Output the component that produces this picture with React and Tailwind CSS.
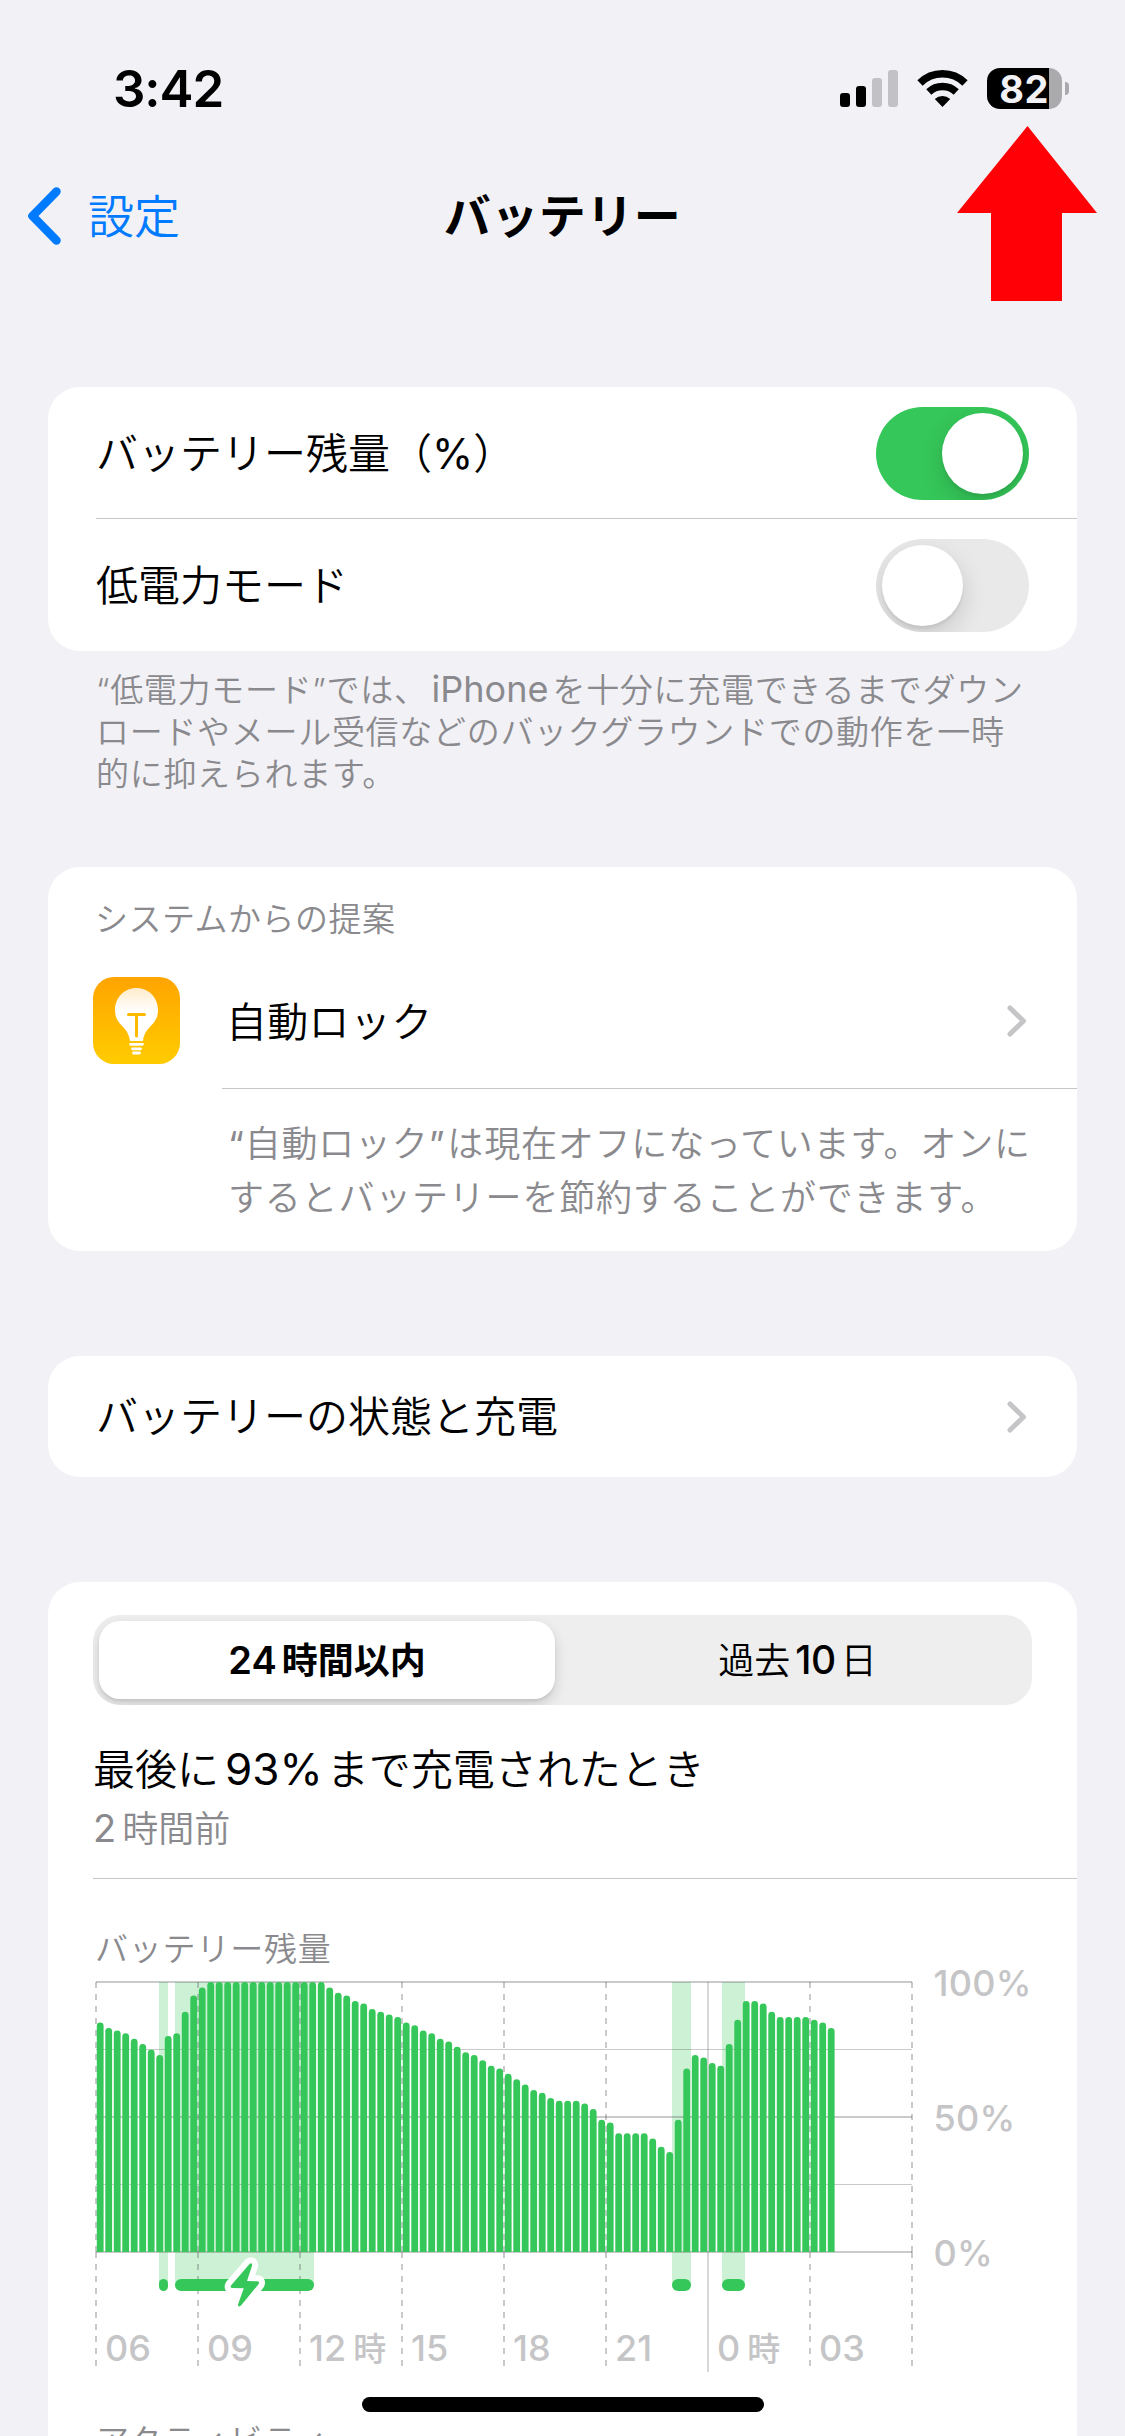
import React from 'react';
import clsx from 'clsx';

const levels = [
  85, 83, 82, 81, 79, 77, 75, 73, 80, 81, 89, 95, 98,
  100, 100, 100, 100, 100, 100, 100, 100, 100, 100, 100, 100, 100, 100,
  98, 96, 95, 93, 92, 90, 89, 88, 87, 85, 84, 82, 81, 79, 78, 76, 74, 73, 71, 69, 68,
  66, 64, 62, 60, 59, 57, 56, 56, 56, 55, 53, 49, 48, 44, 44, 44, 44, 42, 39, 37,
  49, 68, 73, 72, 70, 69, 77, 86, 93, 93, 92, 89, 87, 87, 87, 87, 86, 85, 83
];

const chargingSpans = [
  { start: 63, width: 9 },
  { start: 79, width: 139 },
  { start: 576, width: 19 },
  { start: 626, width: 23 }
];

const hours = [
  { label: '06' },
  { label: '09' },
  { label: '12', unit: '時' },
  { label: '15' },
  { label: '18' },
  { label: '21' },
  { label: '0', unit: '時', solid: true },
  { label: '03' },
  { label: '' }
];

const GREEN = '#35c759';
const BOLT = 'M19.5 2 L1 23.5 Q-0.2 26 2.5 26 L13.8 26.3 L8 42.5 Q8 46 11 43.5 L28.5 22.3 Q30 19.3 27.2 19.3 L17 19 L22.2 3.2 Q22 0 19.5 2 Z';

const Latin = ({ children, className }) => (
  <span className={clsx('font-normal', className)}>{children}</span>
);

const StatusBar = () => (
  <div className="flex h-[154px] items-start justify-between pl-[113px] pr-[56px] pt-[68px]">
    <span className="text-[51px] font-semibold leading-[41px] tracking-[-1.1px]">3:42</span>
    <div className="flex h-[41px] items-center">
      <svg width="58" height="37" viewBox="0 0 58 37">
        <rect x="0" y="23" width="10" height="14" rx="3" />
        <rect x="16" y="16" width="10" height="21" rx="3" />
        <rect x="32" y="8" width="10" height="29" rx="3" fill="#c2c1c6" />
        <rect x="48" y="0" width="10" height="37" rx="3" fill="#c2c1c6" />
      </svg>
      <svg className="ml-[19px]" width="51" height="37" viewBox="0 0 51 37">
        <path d="M3 13 A32 32 0 0 1 48 13" fill="none" stroke="#000" strokeWidth="7.5" />
        <path d="M11.8 22 A20 20 0 0 1 39.2 22" fill="none" stroke="#000" strokeWidth="7.5" />
        <path d="M17.8 29 A11.5 11.5 0 0 1 33.2 29 L25.5 37 Z" />
      </svg>
      <div className="ml-[19px] flex h-[41px] w-[75px] items-center justify-center rounded-[13px] bg-[linear-gradient(90deg,#000_62px,#aaaaac_62px)] pr-px text-[38px] font-bold leading-none tracking-[0.5px] text-[#f2f1f6]">
        82
      </div>
      <div className="ml-[3px] h-[13px] w-[4px] rounded-r-full bg-[#aaaaac]" />
    </div>
  </div>
);

const NavBar = () => (
  <div className="grid h-[124px] grid-cols-3 items-center">
    <button className="flex items-center pl-[27px] text-[#007aff]">
      <svg width="36" height="58" viewBox="0 0 36 58" fill="none" stroke="currentColor" strokeWidth="8.5" strokeLinecap="round" strokeLinejoin="round">
        <path d="M29.5 4.5 L5.5 29 L29.5 53.5" />
      </svg>
      <span className="ml-[25px] text-[46px] leading-none">設定</span>
    </button>
    <h1 className="-mt-[2px] text-center text-[47px] font-bold leading-none tracking-[0.5px]">バッテリー</h1>
  </div>
);

const Toggle = ({ on }) => (
  <div className={clsx('flex h-[93px] w-[153px] overflow-hidden rounded-full p-[6px]', on ? 'justify-end bg-[#35c759]' : 'bg-[#e9e9ea]')}>
    <div className="size-[81px] rounded-full bg-white shadow-[0_9px_24px_rgba(0,0,0,0.15),0_3px_3px_rgba(0,0,0,0.06)]" />
  </div>
);

const Chevron = () => (
  <svg width="20" height="32" viewBox="0 0 20 32" fill="none" stroke="#c5c5c7" strokeWidth="5" strokeLinecap="round" strokeLinejoin="round">
    <path d="M3 3 L16.5 16 L3 29" />
  </svg>
);

const Card = ({ className, children }) => (
  <section className={clsx('rounded-[32px] bg-white', className)}>{children}</section>
);

const BulbIcon = () => (
  <svg width="87" height="87" viewBox="0 0 87 87">
    <defs>
      <linearGradient id="tile" x1="0" y1="0" x2="0" y2="1">
        <stop offset="0" stopColor="#ffa400" />
        <stop offset="1" stopColor="#ffcc00" />
      </linearGradient>
      <linearGradient id="glass" x1="0" y1="0" x2="0" y2="1">
        <stop offset="0" stopColor="#ffeccb" />
        <stop offset="0.45" stopColor="#ffffff" />
      </linearGradient>
    </defs>
    <rect width="87" height="87" rx="21" fill="url(#tile)" />
    <path d="M43.5 11 C31 11 22 21 22 33 C22 49 35 48 37 64 L50 64 C52 48 65 49 65 33 C65 21 56 11 43.5 11 Z" fill="url(#glass)" />
    <path d="M35.5 37.5 H51.5 M43.5 37.5 V59" stroke="#ffba00" strokeWidth="3" strokeLinecap="round" fill="none" />
    <path d="M37.5 67.3 H49.5 M39.5 71.8 H47.5 M40.5 76 H46.5" stroke="#fff" strokeWidth="2.8" strokeLinecap="round" />
  </svg>
);

const BatteryChart = () => (
  <svg className="ml-[44px] block" width="964" height="428" viewBox="-4 -30 964 428">
    {/* charging bands sit behind the bars */}
    {chargingSpans.map((s) => (
      <rect key={s.start} x={s.start} y="0" width={s.width} height="303" fill={GREEN} fillOpacity="0.25" />
    ))}
    {[0, 67.5, 135, 202.5, 270].map((y, i) => (
      <line key={y} x1="0" x2="816" y1={y} y2={y} stroke="#3c3c43" strokeOpacity="0.27" strokeWidth={i % 2 ? 1 : 2} />
    ))}
    {/* the dash pattern restarts below the 0% line */}
    {hours.map((h, i) => (
      <path
        key={i}
        d={h.solid ? `M${i * 102} 0 V390` : `M${i * 102} 0 V270 M${i * 102} 270 V384`}
        fill="none"
        stroke="#3c3c43"
        strokeOpacity="0.27"
        strokeWidth={h.solid ? 1.5 : 2}
        strokeDasharray={h.solid ? undefined : '6 6'}
      />
    ))}
    {levels.map((level, i) => {
      const x = i * 8.5 + 0.8;
      const top = 270 - level * 2.7;
      return (
        <path
          key={i}
          d={`M${x} 270 V${top + 3.4} a3.4 3.4 0 0 1 6.8 0 V270 Z`}
          fill={GREEN}
        />
      );
    })}
    {chargingSpans.map((s) => (
      <rect key={s.start} x={s.start} y="297" width={s.width} height="12" rx={Math.min(6, s.width / 2)} fill={GREEN} />
    ))}
    <g transform="translate(134 280)">
      <path d={BOLT} fill="#fff" stroke="#fff" strokeWidth="12" strokeLinejoin="round" clipPath="url(#boltClip)" />
      <path d={BOLT} fill={GREEN} />
    </g>
    <clipPath id="boltClip">
      <path d="M-10 -10 H40 V29 H24 L10 50 L2 29 H-10 Z" />
    </clipPath>
    <g fill="#c5c5c7" fontSize="36" fontWeight="500">
      {hours.map((h, i) => (
        <text key={i} x={i * 102 + 9} y="379">
          {h.label}
          {h.unit && <tspan dx="7" fontSize="33">{h.unit}</tspan>}
        </text>
      ))}
      {['100%', '50%', '0%'].map((label, i) => (
        <text key={label} x="837.5" y={i * 135 + 13.5} letterSpacing="0.3">{label}</text>
      ))}
    </g>
  </svg>
);

const Segmented = () => (
  <div className="ml-[45px] mr-[45px] flex h-[90px] overflow-hidden rounded-[27px] bg-[#eeeeee] p-[6px] text-[36px]">
    <button className="flex w-[456px] items-center justify-center rounded-[21px] bg-white pt-px font-bold shadow-[0_6px_14px_rgba(0,0,0,0.14),0_2px_3px_rgba(0,0,0,0.08)]">
      <span className="mr-[5px] text-[38px] font-semibold">24</span>時間以内
    </button>
    <button className="flex flex-1 items-center justify-center pl-[14px] pt-px">
      過去<span className="mx-[5px] text-[39px] font-medium tracking-[-0.5px]">10</span>日
    </button>
  </div>
);

export default function App() {
  return (
    <div className="relative h-[2436px] w-[1125px] overflow-hidden bg-[#f2f1f6] font-['Inter','Noto_Sans_CJK_JP',sans-serif] font-[350] text-black" lang="ja">
      <StatusBar />
      <NavBar />

      <main className="ml-12 mr-12 flex flex-col pt-[109px]">
        <Card>
          <div className="flex h-[132px] items-center justify-between pl-12 pr-12">
            <span className="pt-px text-[42px] leading-none">バッテリー残量（<Latin>%</Latin>）</span>
            <Toggle on />
          </div>
          <div className="ml-12 -mt-px h-px bg-[#c6c6c8]" />
          <div className="flex h-[132px] items-center justify-between pl-12 pr-12">
            <span className="pt-px text-[42px] leading-none">低電力モード</span>
            <Toggle />
          </div>
        </Card>
        <p className="ml-12 mt-[18px] whitespace-nowrap text-[33px] leading-[42px] tracking-[0.7px] text-[#8a8a8e]">
          “低電力モード”では、<Latin className="ml-[4px] mr-[4px] text-[36px] leading-none tracking-normal">iPhone</Latin>を十分に充電できるまでダウン<br />
          ロードやメール受信などのバックグラウンドでの動作を一時<br />
          的に抑えられます。
        </p>

        <Card className="mt-[72px] h-[384px] pt-[32px]">
          <div className="pl-[47px] text-[33px] leading-[40px] tracking-[0.5px] text-[#8a8a8e]">システムからの提案</div>
          <div className="mt-[38px] flex h-[87px] items-center pl-[45px] pr-[50px]">
            <BulbIcon />
            <span className="ml-[46px] mt-[3px] flex-1 text-[41px] leading-none tracking-[0.3px]">自動ロック</span>
            <Chevron />
          </div>
          <div className="ml-[174px] mt-[24px] h-px bg-[#c6c6c8]" />
          <p className="ml-[180px] mt-[28px] whitespace-nowrap text-[36px] leading-[54px] tracking-[0.8px] text-[#8a8a8e]">
            <Latin>“</Latin>自動ロック<Latin className="mr-[2px]">”</Latin>は現在オフになっています。オンに<br />
            するとバッテリーを節約することができます。
          </p>
        </Card>

        <Card className="mt-[105px] flex h-[121px] items-center justify-between pl-12 pr-[50px]">
          <span className="text-[42px] leading-none">バッテリーの状態と充電</span>
          <Chevron />
        </Card>

        <Card className="mt-[105px] h-[900px] pt-[33px]">
          <Segmented />
          <div className="ml-[45px] mt-[40px] text-[42px] leading-[50px]">
            最後に<Latin className="ml-[6px] mr-[4px] text-[44px] leading-none">93%</Latin>まで充電されたとき
          </div>
          <div className="ml-[45px] mt-[12px] text-[36px] leading-[44px] text-[#8a8a8e]">
            <Latin className="mr-[6px] text-[38px] leading-none">2</Latin>時間前
          </div>
          <div className="ml-[45px] mt-[27px] h-px bg-[#c6c6c8]" />
          <div className="ml-[47px] mt-[50px] text-[33px] leading-[40px] tracking-[0.8px] text-[#8a8a8e]">バッテリー残量</div>
          <div className="-mt-[17px]">
            <BatteryChart />
          </div>
          <div className="ml-12 mt-[41px] text-[33px] leading-[40px] tracking-[1.2px] text-[#8a8a8e]">アクティビティ</div>
        </Card>
      </main>

      {/* arrow pointing at the battery percentage */}
      <svg className="absolute left-[957px] top-[126px]" width="140" height="175" viewBox="0 0 140 175">
        <path d="M70.5 0 L140 87 H105 V175 H34 V87 H0 Z" fill="#ff0006" />
      </svg>
      <div className="absolute left-[362px] top-[2397px] h-[15px] w-[402px] rounded-full bg-black" />
    </div>
  );
}
